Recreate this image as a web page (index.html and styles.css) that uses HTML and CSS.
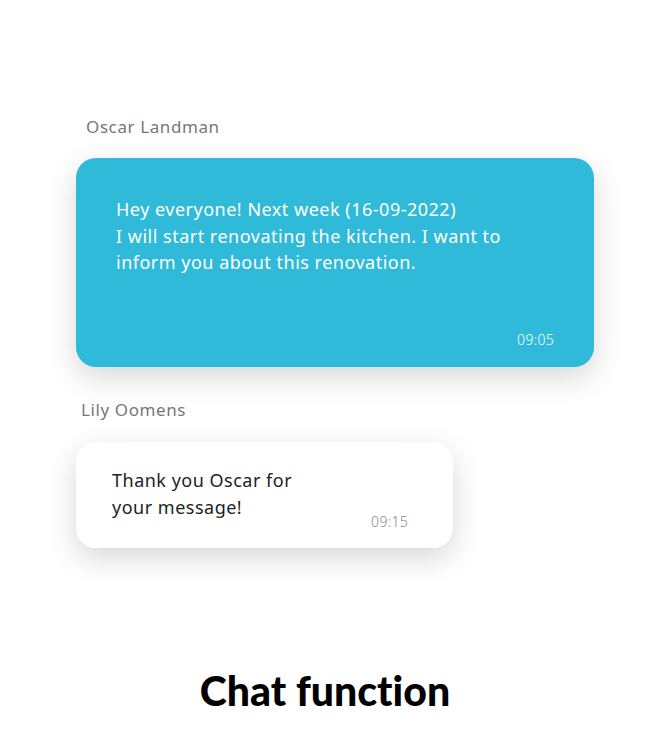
FILE: index.html
```html
<!DOCTYPE html>
<html lang="en">
<head>
  <meta charset="UTF-8" />
  <title>Chat function</title>
  <link rel="stylesheet" href="styles.css">
</head>
<body>
  <div class="chat">
    <div class="sender sender-oscar">Oscar Landman</div>
    <div class="bubble bubble-blue">
      <p class="bubble-text">Hey everyone! Next week (16-09-2022)<br>I will start renovating the kitchen. I want to inform you about this renovation.</p>
      <span class="time">09:05</span>
    </div>

    <div class="sender sender-lily">Lily Oomens</div>
    <div class="bubble bubble-white">
      <p class="bubble-text">Thank you Oscar for your message!</p>
      <span class="time">09:15</span>
    </div>
  </div>

  <h1 class="title">Chat function</h1>
</body>
</html>
```

FILE: styles.css
```css
body {
  margin: 0;
  background: #fff;
  font-family: "Noto Sans", "Open Sans", sans-serif;
}
.chat {
  padding: 117px 0 0 76px;
  height: 538px;
  box-sizing: border-box;
}
.sender {
  font-size: 17px;
  line-height: 20px;
  letter-spacing: 0.6px;
  color: #777;
}
.sender-oscar {
  padding-left: 10px;
  margin-bottom: 21px;
}
.sender-lily {
  padding-left: 5px;
  margin: 33px 0 22px;
}
.bubble {
  border-radius: 20px;
  box-shadow: 0 10px 30px rgba(0,0,0,0.16);
  box-sizing: border-box;
}
.bubble-text {
  margin: 0;
  font-size: 18px;
  line-height: 26.5px;
  letter-spacing: 0.5px;
}
.time {
  font-size: 14px;
  font-weight: 300;
  letter-spacing: 0.3px;
}
.bubble-blue {
  width: 518px;
  height: 209px;
  background: #2fbad9;
  color: #fff;
  padding: 38px 40px 18px 40px;
  display: flex;
  flex-direction: column;
  justify-content: space-between;
}
.bubble-blue .time {
  align-self: flex-end;
}
.bubble-white {
  width: 377px;
  height: 106px;
  background: #fff;
  color: #222;
  padding: 23px 45px 17px 36px;
  display: flex;
  justify-content: space-between;
  align-items: flex-end;
}
.bubble-white .bubble-text {
  width: 195px;
  margin-bottom: 11px;
}
.bubble-white .time {
  color: #888;
}
.title {
  margin: 129px 0 0;
  text-align: center;
  font-family: Lato, sans-serif;
  font-weight: 900;
  font-size: 41px;
  line-height: 48px;
  font-variant-ligatures: none;
  color: #000;
}
```
